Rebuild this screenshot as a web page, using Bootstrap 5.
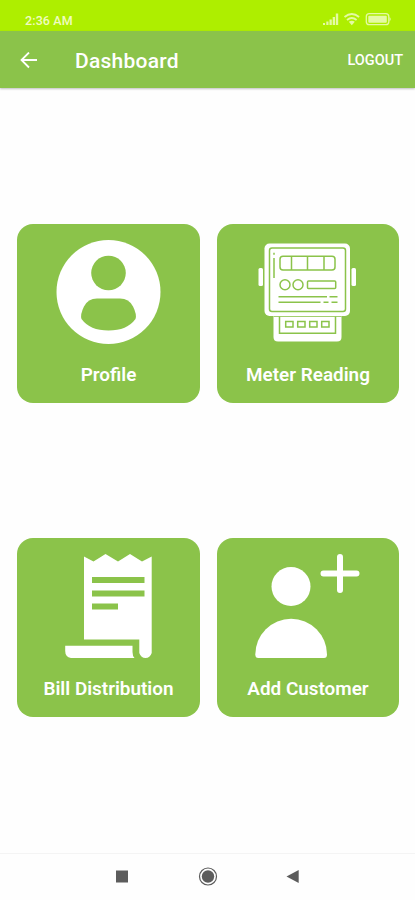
<!DOCTYPE html>
<html lang="en">
<head>
<meta charset="utf-8">
<meta name="viewport" content="width=device-width, initial-scale=1">
<title>Dashboard</title>
<link href="https://cdn.jsdelivr.net/npm/bootstrap@5.3.0/dist/css/bootstrap.min.css" rel="stylesheet">
<style>
:root{--leaf:#8bc34a}
body{font-family:Roboto,"Liberation Sans",sans-serif;height:900px;overflow:hidden;background:#fefefe}
svg{display:block;flex:none}
.status-bar{height:31px;background:#aeee00;padding:9px 23px 0 25px;color:#f0fcc0;font-size:12.5px;line-height:22px;font-weight:500;letter-spacing:.12px}
.status-time{padding-top:1px}
.status-icons{margin-top:2px}
.app-bar{height:57px;background:var(--leaf);box-shadow:0 1px 2px rgba(0,0,0,.25);padding:2px 12px 0 20px}
.app-title{font-size:21px;font-weight:500;line-height:1;margin-left:37px;padding-top:2px;letter-spacing:.25px}
.logout{font-size:14.5px;font-weight:500;line-height:18px;padding-top:1px;color:#fff}
.tiles{padding:136px 16px 0 17px;display:grid;grid-template-columns:183px 182px;column-gap:17px;row-gap:135px;align-content:start}
.tile{height:179px;background:var(--leaf);border-radius:16px;color:#fff;text-decoration:none}
.tile-label{font-size:18.9px;font-weight:600;line-height:22px;margin-top:10px;white-space:nowrap}
.nav-keys{height:47px;border-top:1px solid #f4f4f4}
</style>
<script src="https://cdn.jsdelivr.net/npm/bootstrap@5.3.0/dist/js/bootstrap.bundle.min.js"></script>
</head>
<body class="d-flex flex-column">
<div class="status-bar d-flex justify-content-between flex-shrink-0">
  <span class="status-time">2:36 AM</span>
  <svg class="status-icons" width="70" height="16" viewBox="322 11 70 16" fill="#e4faa4">
    <path d="M323 23h2v2h-2zM326.300 21.500h2.200v3.500h-2.200zM329.500 19.500h2.300v5.500h-2.300zM332.700 17h2.300v8h-2.300zM335.800 13.500h2.400v11.500h-2.400z"/>
    <g fill="none" stroke="#e4faa4" stroke-width="1.800"><path d="M344.500 17q7.300-6 14.600 0M347 20q4.800-4 9.600 0"/></g>
    <path d="M348.800 21.800q3-2 6 0l-3 3.500z"/>
    <rect x="366.300" y="13.700" width="22.500" height="11" rx="3" fill="none" stroke="#e4faa4" stroke-width="1.300"/>
    <rect x="368.300" y="15.700" width="18.500" height="7" rx="1"/>
    <path d="M389.500 17q2.500 2.200 0 4.400z"/>
  </svg>
</div>
<header class="app-bar d-flex align-items-center text-white flex-shrink-0">
  <svg width="18" height="18" viewBox="20.500 52.500 18 18" fill="none" stroke="#fff" stroke-width="1.800"><path d="M37.500 60.500H22M29.500 53L22 60.500l7.500 7.500"/></svg>
  <h1 class="app-title mb-0">Dashboard</h1>
  <a class="logout text-decoration-none ms-auto" href="#">LOGOUT</a>
</header>
<main class="tiles flex-grow-1">
  <a class="tile d-flex flex-column align-items-center" href="#">
    <svg width="183" height="130" viewBox="17 224 183 130">
      <circle cx="108.500" cy="292" r="52" fill="#fff"/>
      <circle cx="108.500" cy="273" r="17.300" fill="#8bc34a"/>
      <path d="M97 298.500h23q9 0 13 8 4 8 2.500 12.500Q127 330.500 108.500 330.500T81.500 319Q80 314.500 84 306.500 88 298.500 97 298.500z" fill="#8bc34a"/>
    </svg>
    <span class="tile-label">Profile</span>
  </a>
  <a class="tile d-flex flex-column align-items-center" href="#">
    <svg width="182" height="130" viewBox="217 224 182 130">
      <g fill="#fff">
        <rect x="258.500" y="268" width="4.500" height="18" rx="1.500"/><rect x="351.500" y="268" width="4.500" height="18" rx="1.500"/>
        <path d="M273.500 314H341.500V337q0 4.500-4.500 4.500H278q-4.500 0-4.500-4.500z"/>
        <rect x="264.500" y="243.500" width="85.500" height="72.500" rx="5"/>
      </g>
      <g fill="none" stroke="#8bc34a" stroke-width="1.500">
        <rect x="269.500" y="248" width="76" height="63.500" rx="2.500"/>
        <path d="M279.500 316.500V333.300H335.500V316.500"/>
        <path d="M273.700 316.500H341.500" stroke-width=".8"/>
        <rect x="280" y="256.200" width="55" height="13.800" rx="3"/>
        <path d="M291.500 256v14M307.500 256v14M324 256v14"/>
        <circle cx="285" cy="284.800" r="5"/><circle cx="298" cy="284.800" r="5"/>
        <rect x="307.500" y="281" width="28.200" height="7.500" rx="1"/>
        <path d="M278.500 296.800H327M329.500 296.800H337.500M278.500 302.200H320.500M323.500 302.200H328.500M331.500 302.200H337.500M274 258V278M274 252.700v2"/>
        <path d="M285.700 321.500h7.300v5.500h-7.300zM297.700 321.500h7.300v5.500h-7.300zM309.700 321.500h7.300v5.500h-7.300zM321.700 321.500h7.300v5.500h-7.300z"/>
      </g>
    </svg>
    <span class="tile-label">Meter Reading</span>
  </a>
  <a class="tile d-flex flex-column align-items-center" href="#">
    <svg width="183" height="130" viewBox="17 538 183 130">
      <g fill="#fff">
        <path d="M84 556.500L93.500 561.500 105.500 554 118 561.500 130 554 142 561.500 151.700 556.500V653Q150 658 145.500 658T139.300 653V639.500H84z"/>
        <path d="M65.200 645.800H132.500V652Q132.500 656 134.500 658H71Q65.200 657 65.200 651z"/>
      </g>
      <path d="M92 577h52.500v6H92zM92 590.500h52.500v6H92zM92 603.500h26v6H92z" fill="#8bc34a"/>
    </svg>
    <span class="tile-label">Bill Distribution</span>
  </a>
  <a class="tile d-flex flex-column align-items-center" href="#">
    <svg width="182" height="130" viewBox="217 538 182 130">
      <g fill="#fff">
        <circle cx="291" cy="586.500" r="19.500"/>
        <path d="M255.300 654.500A35.800 35.800 0 0 1 327 654.500Q327 658 324 658H258.300Q255.300 658 255.300 654.500z"/>
      </g>
      <path d="M340 557V590M323.500 573.500H356.500" stroke="#fff" stroke-width="6" stroke-linecap="round"/>
    </svg>
    <span class="tile-label">Add Customer</span>
  </a>
</main>
<nav class="nav-keys flex-shrink-0 d-flex justify-content-center">
  <svg width="200" height="46" viewBox="108 854 200 46" fill="#5c5c5c">
    <rect x="116" y="870.500" width="12" height="12"/>
    <circle cx="208" cy="876.500" r="6.200"/><circle cx="208" cy="876.500" r="8.500" fill="none" stroke="#5c5c5c" stroke-width="1.200"/>
    <path d="M286.500 876.500L298.700 870v13z"/>
  </svg>
</nav>
</body>
</html>
